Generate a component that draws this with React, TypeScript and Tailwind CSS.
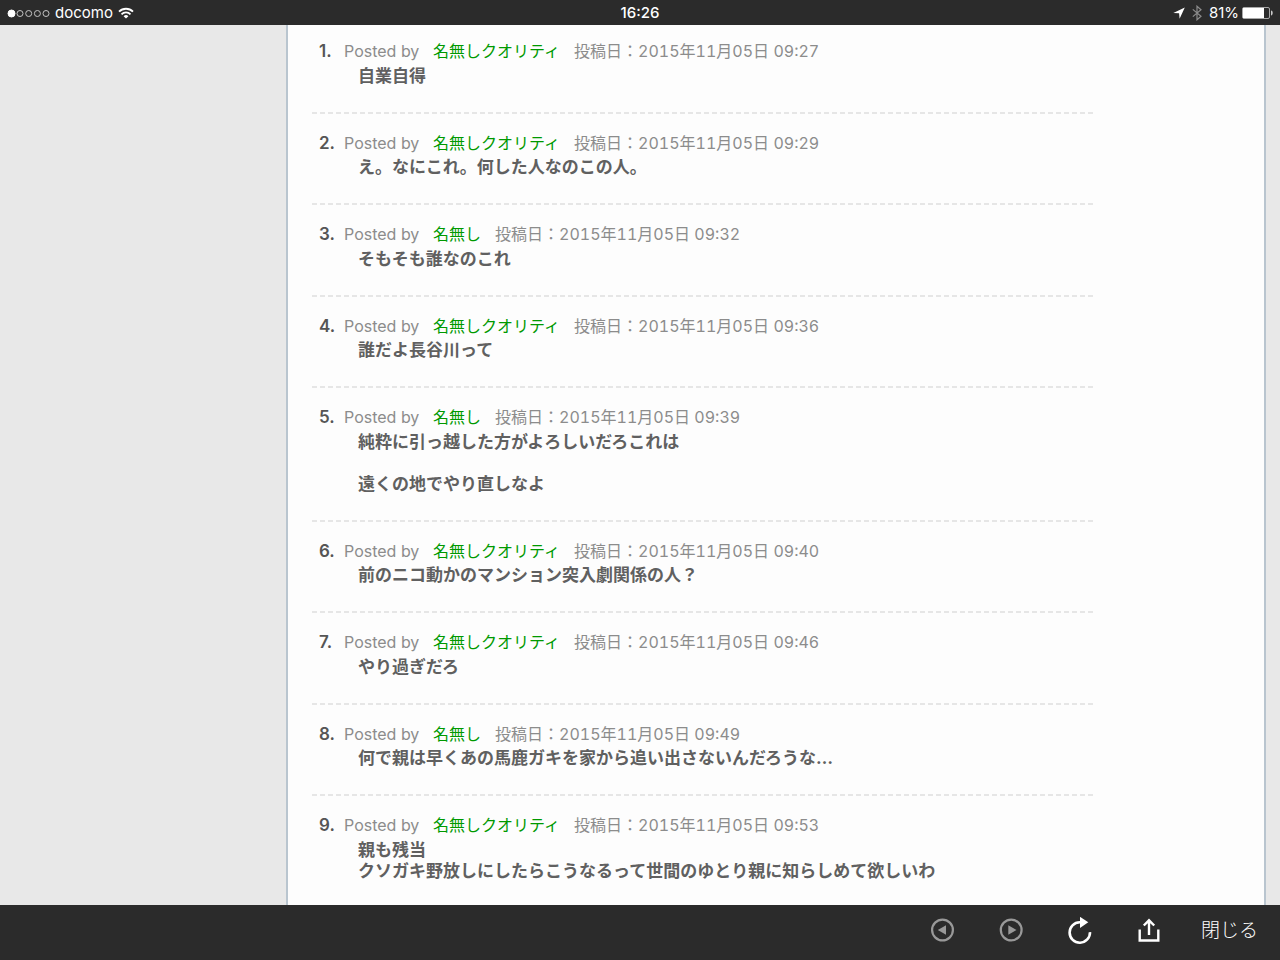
interface Comment {
  name: string;
  time: string;
  lines: string[];
}

const comments: Comment[] = [
  { name: '名無しクオリティ', time: '09:27', lines: ['自業自得'] },
  { name: '名無しクオリティ', time: '09:29', lines: ['え。なにこれ。何した人なのこの人。'] },
  { name: '名無し', time: '09:32', lines: ['そもそも誰なのこれ'] },
  { name: '名無しクオリティ', time: '09:36', lines: ['誰だよ長谷川って'] },
  { name: '名無し', time: '09:39', lines: ['純粋に引っ越した方がよろしいだろこれは', '', '遠くの地でやり直しなよ'] },
  { name: '名無しクオリティ', time: '09:40', lines: ['前のニコ動かのマンション突入劇関係の人？'] },
  { name: '名無しクオリティ', time: '09:46', lines: ['やり過ぎだろ'] },
  { name: '名無し', time: '09:49', lines: ['何で親は早くあの馬鹿ガキを家から追い出さないんだろうな…'] },
  {
    name: '名無しクオリティ',
    time: '09:53',
    lines: ['親も残当', 'クソガキ野放しにしたらこうなるって世間のゆとり親に知らしめて欲しいわ'],
  },
];

function SignalDots() {
  return (
    <svg viewBox="0 0 43 9" className="h-[9px] w-[43px]" fill="none" stroke="#c4c4c4" strokeWidth="1">
      <circle cx="4.5" cy="4.5" r="3.5" fill="#fff" stroke="#fff" />
      <circle cx="13" cy="4.5" r="3" />
      <circle cx="21.7" cy="4.5" r="3" />
      <circle cx="30.4" cy="4.5" r="3" />
      <circle cx="39" cy="4.5" r="3" />
    </svg>
  );
}

function WifiIcon() {
  return (
    <svg viewBox="0 0 16 12" className="h-3 w-4" fill="none" stroke="#fff" strokeWidth="1.8">
      <path d="M1 4.6a10 10 0 0 1 14 0" />
      <path d="M3.5 7.3a6.3 6.3 0 0 1 9 0" />
      <path d="M8 11.6 5.6 9.2a3.4 3.4 0 0 1 4.8 0z" fill="#fff" stroke="none" />
    </svg>
  );
}

function LocationIcon() {
  return (
    <svg viewBox="0 0 12 12" className="h-3 w-3" fill="#fff">
      <path d="M11.8.4 6.6 11.7 6.1 6.3.3 5.9z" />
    </svg>
  );
}

function BluetoothIcon() {
  return (
    <svg viewBox="0 0 10 16" className="h-4 w-[10px]" fill="none" stroke="#8c8c8c" strokeWidth="1.2">
      <path d="M.8 4.4 9 11.3 5 14.8V1.2l4 3.5-8.2 6.9" />
    </svg>
  );
}

function BatteryIcon() {
  return (
    <svg viewBox="0 0 31 12" className="h-3 w-[31px]">
      <rect x=".5" y=".5" width="27" height="11" rx="1.5" fill="none" stroke="#a8a8a8" />
      <rect x="1" y="1" width="21" height="10" fill="#fff" />
      <path d="M29 3.5c1.2.3 1.7 1.2 1.7 2.5s-.5 2.2-1.7 2.5z" fill="#c8c8c8" />
    </svg>
  );
}

function StatusBar() {
  return (
    <header className="grid h-[25px] shrink-0 grid-cols-3 items-center bg-[#2b2b2b] px-[7px] pt-px text-[15px] text-white">
      <div className="flex items-center gap-[5px]">
        <SignalDots />
        <span>docomo</span>
        <WifiIcon />
      </div>
      <time className="text-center font-medium">16:26</time>
      <div className="flex items-center justify-end">
        <LocationIcon />
        <span className="mx-[7px]">
          <BluetoothIcon />
        </span>
        <span className="mr-[3px]">81%</span>
        <BatteryIcon />
      </div>
    </header>
  );
}

function CommentItem({ comment, index }: { comment: Comment; index: number }) {
  return (
    <li className="group">
      <div className="flex items-baseline pl-[7px] whitespace-nowrap text-[#8c8c8c]">
        <span className="w-[25px] text-[17px] font-semibold text-[#555]">{index}.</span>
        <span className="w-[89px]">Posted by</span>
        <a href="#" className="text-[#009900]">
          {comment.name}
        </a>
        <span className="ml-[14px]">投稿日：</span>
        <span className="tabular-nums">2015年11月05日 {comment.time}</span>
      </div>
      <div className="mt-px pb-[25px] pl-[46px] text-[17px] leading-[21px] font-bold text-[#606060]">
        {comment.lines.map((line, i) => (
          <p key={i} className="min-h-[21px]">
            {line}
          </p>
        ))}
      </div>
      <div className="h-0.5 bg-[repeating-linear-gradient(90deg,#e6e6e6_0_5px,transparent_5px_8px)] group-last:hidden" />
    </li>
  );
}

function Toolbar() {
  return (
    <nav className="flex h-[55px] shrink-0 items-center justify-end bg-[#2b2b2b] pr-[22px] pb-1 text-white">
      <div className="flex items-center gap-[41px]">
        <button type="button" aria-label="戻る">
          <svg viewBox="0 0 28 28" className="size-7" fill="none" stroke="#999" strokeWidth="2.2">
            <circle cx="14.5" cy="13" r="10.4" />
            <path d="M18 8.3v9.4L9.8 13z" fill="#999" stroke="none" />
          </svg>
        </button>
        <button type="button" aria-label="進む">
          <svg viewBox="0 0 28 28" className="size-7" fill="none" stroke="#999" strokeWidth="2.2">
            <circle cx="14.2" cy="13" r="10.4" />
            <path d="M11.3 8.3v9.4l8.2-4.7z" fill="#999" stroke="none" />
          </svg>
        </button>
        <button type="button" aria-label="再読み込み">
          <svg viewBox="0 0 28 28" className="size-7" fill="none" stroke="#fff" strokeWidth="2.6">
            <path d="M15.5 5.3h-1.7a10.2 10.2 0 1 0 10.2 9.8" />
            <path d="M14-.2 22.3 5.3 14 11z" fill="#fff" stroke="none" />
          </svg>
        </button>
        <button type="button" aria-label="共有">
          <svg viewBox="0 0 28 28" className="size-7" fill="none" stroke="#fff" strokeWidth="2.4">
            <path d="M4.7 12.5v11h18.6v-11" />
            <path d="M14 18V3.5M8.8 8.5 14 3.3l5.2 5.2" />
          </svg>
        </button>
      </div>
      <button type="button" className="ml-[38px] text-[19px] leading-7 font-light">
        閉じる
      </button>
    </nav>
  );
}

export default function App() {
  return (
    <div className="flex h-screen flex-col overflow-hidden bg-[#e8e8e8] font-['Inter','Noto_Sans_CJK_JP',sans-serif]">
      <StatusBar />
      <div className="flex min-h-0 flex-1 pr-[14px] pl-[286px]">
        <main className="flex-1 overflow-hidden border-x-2 border-[#b9c5cf] bg-[#fdfdfd] px-6">
          <ol className="flex max-w-[784px] flex-col gap-[17px] pt-[14px]">
            {comments.map((comment, i) => (
              <CommentItem key={comment.time} comment={comment} index={i + 1} />
            ))}
          </ol>
        </main>
      </div>
      <Toolbar />
    </div>
  );
}
